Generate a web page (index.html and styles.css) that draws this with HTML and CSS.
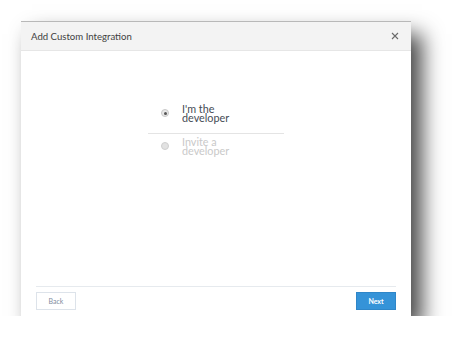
FILE: index.html
```html
<!DOCTYPE html>
<html>
<head>
<meta charset="utf-8">
<link rel="stylesheet" href="styles.css">
</head>
<body>
<div class="dialog">
  <div class="header">
    <span class="title">Add Custom Integration</span>
    <svg class="close" width="8" height="8" viewBox="0 0 8 8"><path d="M1 1L7 7M7 1L1 7" stroke="#6a6a6a" stroke-width="1.1" fill="none"/></svg>
  </div>
  <div class="body">
    <div class="options">
      <div class="option active">
        <span class="radio"><span class="dot"></span></span>
        <span class="label">I'm the<br>developer</span>
      </div>
      <div class="option disabled">
        <span class="radio"></span>
        <span class="label">Invite a<br>developer</span>
      </div>
    </div>
  </div>
  <div class="footer">
    <button class="btn back">Back</button>
    <button class="btn next">Next</button>
  </div>
</div>
</body>
</html>
```
FILE: styles.css
```css
html, body { margin: 0; padding: 0; background: #fff; }
body { padding: 21px 0 0 21px; font-family: "Lato", "Open Sans", sans-serif; }
.dialog {
  width: 390px;
  height: 295px;
  background: #fff;
  border-top: 1px solid #b8b8b8;
  box-sizing: border-box;
  box-shadow: 11px 13px 20px rgba(0,0,0,0.72);
  display: flex;
  flex-direction: column;
}
.header {
  height: 29px;
  background: #f3f3f3;
  border-bottom: 1px solid #e6e6e6;
  display: flex;
  align-items: center;
  justify-content: space-between;
  padding: 0 10px 0 10px;
  box-sizing: border-box;
}
.title { font-size: 9.6px; color: #3f3f3f; }
.close { display: block; margin-right: 2px; }
.body { flex: 1; display: flex; justify-content: center; padding-top: 48px; }
.options { width: 136px; }
.option {
  display: flex;
  align-items: center;
  padding: 0 0 0 13px;
  height: 28px;
}
.option.active { border-bottom: 1px solid #e4e4e4; padding-bottom: 6px; }
.option.disabled { padding-top: 0; height: 24px; }
.radio {
  width: 6px; height: 6px; border-radius: 50%;
  border: 1px solid #c8c8c8; background: #e8e8e8;
  display: flex; align-items: center; justify-content: center;
  margin-right: 13px;
}
.dot { width: 3px; height: 3px; border-radius: 50%; background: #555; }
.label { font-size: 10.8px; line-height: 9.5px; }
.active .label { color: #454b54; }
.disabled .label { color: #c9c9c9; }
.disabled .radio { background: #e2e2e2; border-color: #cfcfcf; }
.footer {
  margin: 0 15px;
  border-top: 1px solid #e6eaee;
  height: 30px;
  display: flex;
  justify-content: space-between;
  padding-top: 5px;
  box-sizing: border-box;
}
.btn {
  width: 40px; height: 18px;
  font-family: inherit; font-size: 7px; padding: 0;
  box-sizing: border-box;
}
.back { background: #fff; border: 1px solid #dde3ea; color: #7f8da0; }
.next { background: #3593d8; border: 1px solid #2f86c8; color: #fff; font-weight: bold; }
```
